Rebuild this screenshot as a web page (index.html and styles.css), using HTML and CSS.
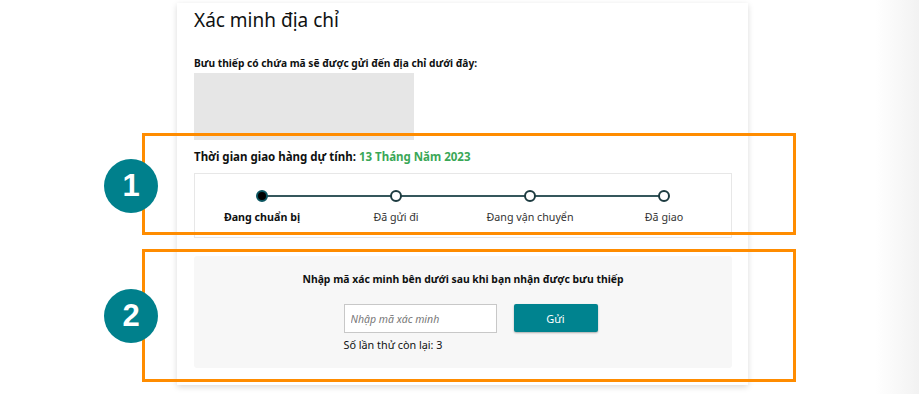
FILE: index.html
```html
<!DOCTYPE html>
<html lang="vi">
<head>
  <meta charset="UTF-8" />
  <meta name="viewport" content="width=device-width, initial-scale=1.0" />
  <title>Xác minh địa chỉ</title>
  <link rel="stylesheet" href="styles.css">
</head>
<body>
  <div class="page">
    <div class="card">
      <h1>Xác minh địa chỉ</h1>

      <p class="label intro">Bưu thiếp có chứa mã sẽ được gửi đến địa chỉ dưới đây:</p>
      <div class="address"></div>

      <p class="label delivery">Thời gian giao hàng dự tính: <span class="date">13 Tháng Năm 2023</span></p>

      <div class="tracker">
        <div class="step done">
          <span class="dot"></span>
          <span class="step-name">Đang chuẩn bị</span>
        </div>
        <div class="step">
          <span class="dot"></span>
          <span class="step-name">Đã gửi đi</span>
        </div>
        <div class="step">
          <span class="dot"></span>
          <span class="step-name">Đang vận chuyển</span>
        </div>
        <div class="step last">
          <span class="dot"></span>
          <span class="step-name">Đã giao</span>
        </div>
      </div>

      <div class="verify">
        <p class="label">Nhập mã xác minh bên dưới sau khi bạn nhận được bưu thiếp</p>
        <div class="verify-row">
          <div class="field">
            <input type="text" placeholder="Nhập mã xác minh">
            <div class="tries">Số lần thử còn lại: 3</div>
          </div>
          <button type="button">Gửi</button>
        </div>
      </div>
    </div>

    <!-- callouts -->
    <div class="callout box-1"></div>
    <div class="callout box-2"></div>
    <div class="badge badge-1">1</div>
    <div class="badge badge-2">2</div>
  </div>
</body>
</html>
```

FILE: styles.css
```css
body {
  margin: 0;
  font-family: "Noto Sans", Arial, sans-serif;
  color: #0f1111;
  background: linear-gradient(to right, #fff 0, #fff 875px, #f2f2f2 919px);
  height: 394px;
  overflow: hidden;
}
.page {
  position: relative;
  width: 919px;
  height: 394px;
  box-sizing: border-box;
  padding-top: 3px;
}
.card {
  margin-left: 177px;
  width: 571px;
  height: 382px;
  box-sizing: border-box;
  padding: 0 17px;
  background-color: #fff;
  box-shadow: 0 2px 6px rgba(0,0,0,0.15);
}
h1 {
  margin: 0;
  padding-top: 3px;
  font-size: 19px;
  font-weight: 400;
  line-height: 28px;
}
.label {
  margin: 0;
  font-size: 11.5px;
  font-weight: 700;
  line-height: 16px;
}
.intro {
  margin-top: 21px;
  font-size: 10.2px;
}
.address {
  width: 220px;
  height: 67px;
  margin-top: 2px;
  background-color: #e6e6e6;
}
.delivery {
  margin-top: 9px;
}
.date {
  color: #3aa757;
}
.tracker {
  display: grid;
  grid-template-columns: repeat(4, 1fr);
  margin-top: 8px;
  width: 538px;
  height: 65px;
  box-sizing: border-box;
  border: 1px solid #e7e7e7;
  padding-top: 16px;
}
.step {
  position: relative;
  display: flex;
  flex-direction: column;
  align-items: center;
}
.step::after {
  content: "";
  position: absolute;
  top: 5px;
  left: 50%;
  width: 100%;
  height: 2px;
  background-color: #35575c;
}
.step.last::after {
  display: none;
}
.dot {
  position: relative;
  z-index: 1;
  width: 8px;
  height: 8px;
  border: 2px solid #1d3b40;
  border-radius: 50%;
  background-color: #fff;
}
.step.done .dot {
  background-color: #000;
  border-color: #0b5560;
}
.step-name {
  margin-top: 7px;
  font-size: 10.7px;
  line-height: 16px;
  color: #333;
}
.step.done .step-name {
  font-weight: 700;
  color: #0f1111;
}
.verify {
  margin-top: 18px;
  width: 538px;
  height: 112px;
  box-sizing: border-box;
  padding-top: 15px;
  background-color: #f7f7f7;
  border-radius: 3px;
}
.verify .label {
  text-align: center;
  font-size: 10.4px;
}
.verify-row {
  display: flex;
  justify-content: center;
  gap: 17px;
  margin-top: 17px;
  padding-left: 15px;
}
.field {
  display: flex;
  flex-direction: column;
}
input {
  width: 153px;
  height: 29px;
  box-sizing: border-box;
  border: 1px solid #c8c8c8;
  padding: 0 6px;
  font-family: inherit;
  font-size: 10.5px;
  background: #fff;
}
input::placeholder {
  color: #777;
  font-style: italic;
}
.tries {
  margin-top: 4px;
  font-size: 10.8px;
  line-height: 16px;
}
button {
  width: 84px;
  height: 28px;
  border: none;
  border-radius: 2px;
  background-color: #00838f;
  color: #fff;
  font-family: inherit;
  font-size: 11px;
  box-shadow: 0 1px 2px rgba(0,0,0,0.3);
}
.callout {
  position: absolute;
  left: 142px;
  width: 654px;
  box-sizing: border-box;
  border: 3px solid #ff8c00;
}
.box-1 {
  top: 133px;
  height: 102px;
}
.box-2 {
  top: 249px;
  height: 133px;
}
.badge {
  position: absolute;
  left: 104px;
  width: 54px;
  height: 54px;
  border-radius: 50%;
  background-color: #00808c;
  color: #fff;
  font-family: "Liberation Sans", Arial, sans-serif;
  font-weight: 700;
  font-size: 31px;
  line-height: 54px;
  text-align: center;
}
.badge-1 {
  top: 159px;
}
.badge-2 {
  top: 289px;
}
```
